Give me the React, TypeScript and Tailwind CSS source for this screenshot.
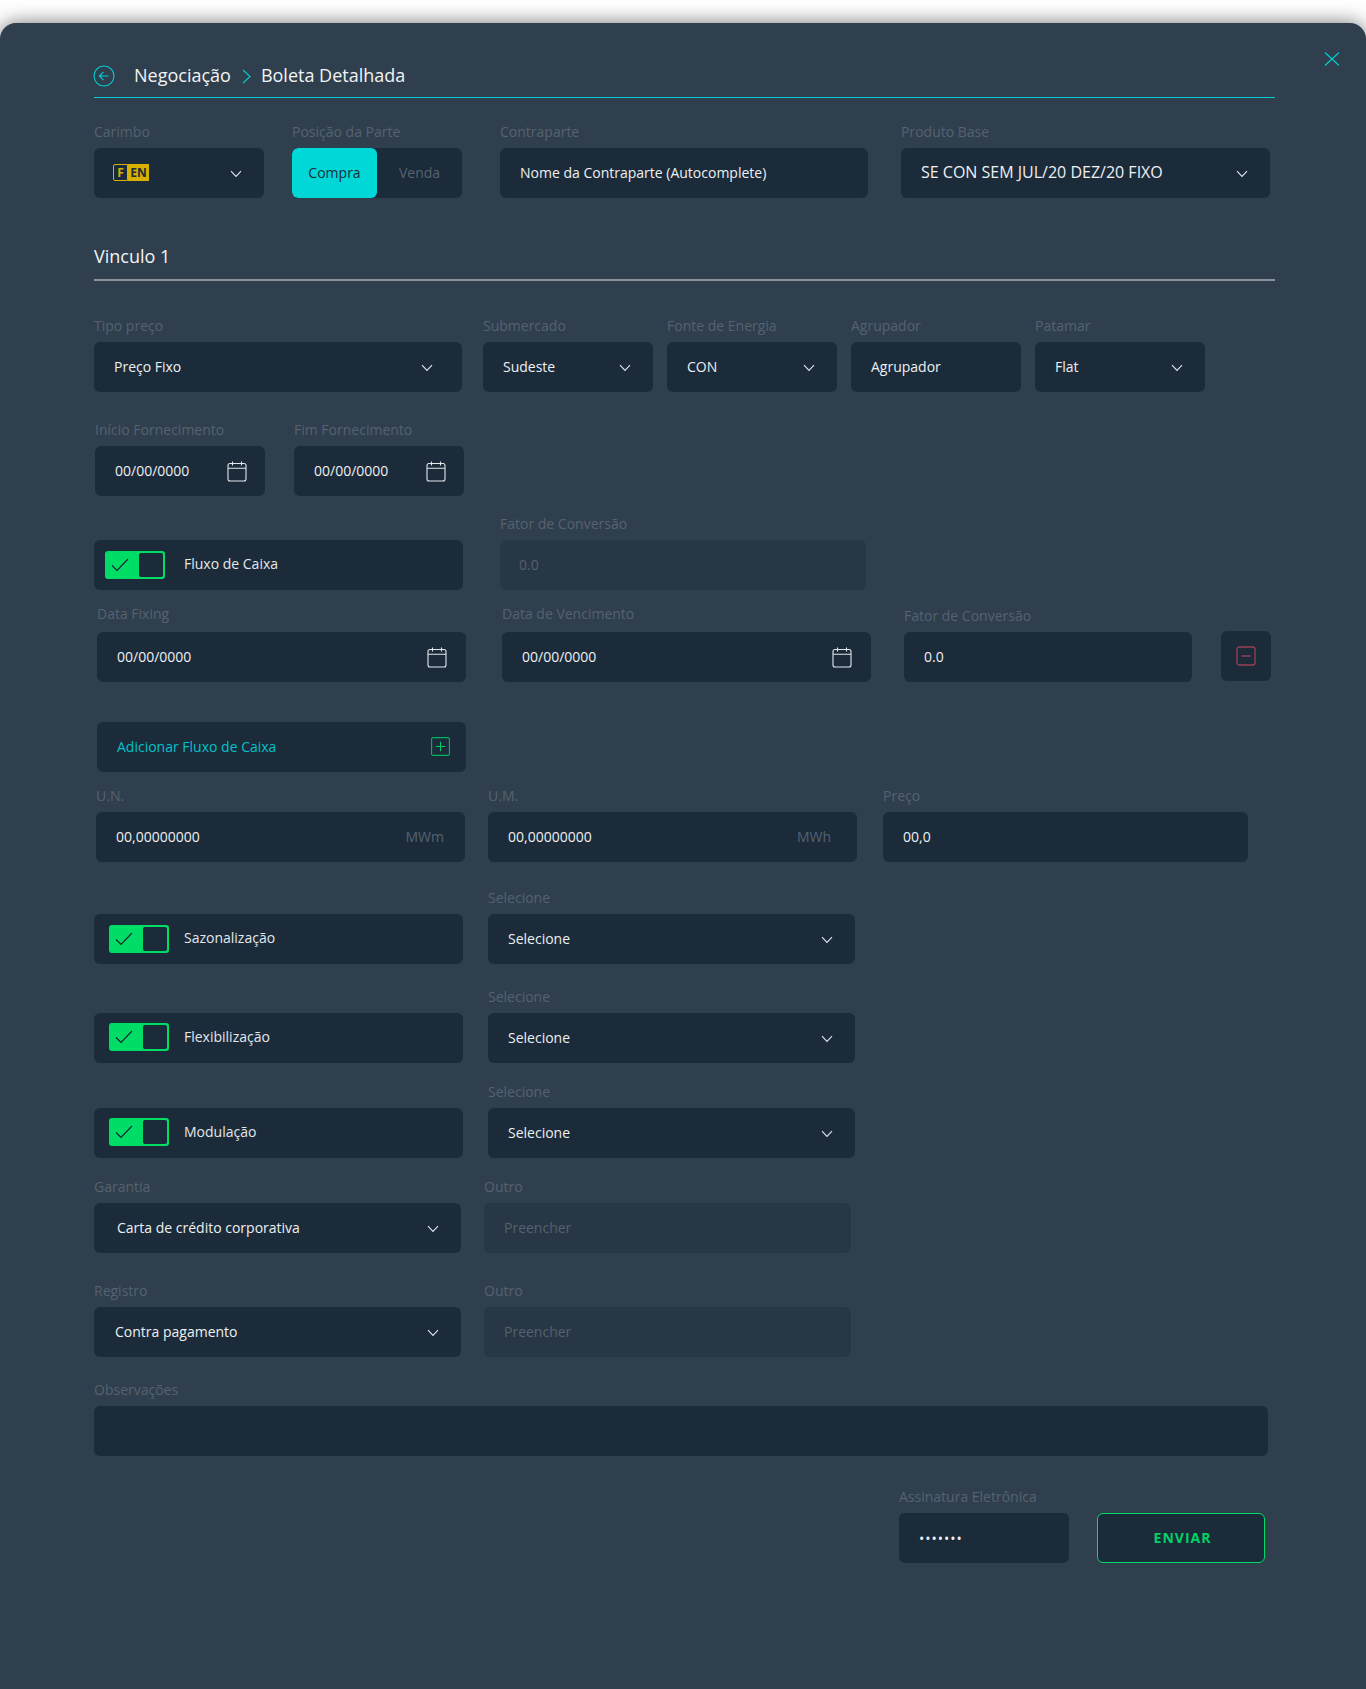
import React from "react";

const box = "h-[50px] rounded-[6px] bg-[#1b2b3a] flex items-center text-[14px]";
const txt = `${box} pb-[2px] text-[#eef0f2]`;
const dim = "h-[50px] rounded-[6px] bg-[#283745] flex items-center pb-[2px] text-[14px] text-[#55616e]";

function Chevron() {
  return (
    <svg width="12" height="8" viewBox="0 0 12 8" fill="none" className="shrink-0 mt-[4px]">
      <path d="M1 1.2 L6 6.4 L11 1.2" stroke="#e4e7ea" strokeWidth="1.1" />
    </svg>
  );
}

function Calendar() {
  return (
    <svg width="20" height="21" viewBox="0 0 20 21" fill="none" className="shrink-0 mt-[2px]">
      <rect x="1" y="2.5" width="18" height="17.5" rx="2" stroke="#e4e7ea" strokeWidth="1.1" />
      <path d="M1 7.2 H19 M5.5 0.5 V4.5 M14.5 0.5 V4.5" stroke="#e4e7ea" strokeWidth="1.1" />
    </svg>
  );
}

function Field({
  label,
  className = "",
  labelClass = "mb-[6px]",
  children,
}: {
  label?: string;
  className?: string;
  labelClass?: string;
  children: React.ReactNode;
}) {
  return (
    <div className={`flex flex-col shrink-0 ${className}`}>
      <div className={`h-[20px] text-[14px] leading-[20px] text-[#56626f] whitespace-nowrap ${labelClass}`}>{label}</div>
      {children}
    </div>
  );
}

function Select({ text, right = "pr-[22px]", left = "pl-[20px]" }: { text: string; right?: string; left?: string }) {
  return (
    <div className={`${txt} ${left} ${right} justify-between`}>
      <span>{text}</span>
      <Chevron />
    </div>
  );
}

function DateBox({ right = "pr-[19px]" }: { right?: string }) {
  return (
    <div className={`${txt} pl-[20px] ${right} justify-between`}>
      <span>00/00/0000</span>
      <Calendar />
    </div>
  );
}

function Toggle({ label, pad, gap }: { label: string; pad: string; gap: string }) {
  return (
    <div className={`${box} ${pad} w-[369px]`}>
      <div className="w-[60px] h-[28px] rounded-[3px] bg-[#00dd66] p-[2px] flex items-center justify-end relative shrink-0">
        <svg width="18" height="14" viewBox="0 0 18 14" fill="none" className="absolute left-[6px] top-[7px]">
          <path d="M1 7.5 L6 12.5 L17 1" stroke="#14222f" strokeWidth="1.1" />
        </svg>
        <div className="w-[24px] h-[24px] rounded-[2px] bg-[#1b2b3a]" />
      </div>
      <span className={`${gap} text-[#e4e7ea]`}>{label}</span>
    </div>
  );
}

export default function App() {
  return (
    <div
      className="w-[1366px] h-[1689px] overflow-hidden bg-white pt-[23px] flex flex-col"
      style={{ fontFamily: '"Open Sans", sans-serif' }}
    >
      <div className="relative flex-1 rounded-t-[16px] bg-[#2f3f4e] shadow-[0_0_20px_rgba(0,0,0,0.55)] pl-[94px]">
        <svg width="16" height="16" viewBox="0 0 16 16" fill="none" className="absolute left-[1324px] top-[28px]">
          <path d="M1 1.5 L15 14.5 M15 1.5 L1 14.5" stroke="#00d0d4" strokeWidth="1.1" />
        </svg>

        {/* Header */}
        <div className="mt-[33px] w-[1181px] h-[42px] pb-[3px] border-b-[1.5px] border-[#00cfd4] flex items-center text-[18px] text-[#f2f4f5]">
          <svg width="22" height="22" viewBox="0 0 22 22" fill="none" className="shrink-0 mt-[2px] -ml-px">
            <circle cx="11" cy="11" r="10" stroke="#00cfd4" strokeWidth="1.1" />
            <path d="M15.5 11 H6.5 M10.5 6.8 L6.3 11 L10.5 15.2" stroke="#00cfd4" strokeWidth="1.1" />
          </svg>
          <span className="ml-[19px]">Negociação</span>
          <svg width="9" height="15" viewBox="0 0 9 15" fill="none" className="ml-[11px] mt-[2px] shrink-0">
            <path d="M1 1 L8 7.5 L1 14" stroke="#00cfd4" strokeWidth="1.1" />
          </svg>
          <span className="ml-[10px]">Boleta Detalhada</span>
        </div>

        {/* Row 1 */}
        <div className="flex mt-[24px]">
          <Field label="Carimbo" className="w-[170px]">
            <div className={`${box} pb-[2px] pl-[19px] pr-[22px] justify-between`}>
              <div className="flex h-[17px] w-[36px] mt-[1px] text-[12px] font-bold leading-[17px] text-[#d8b000]">
                <div className="w-[15px] text-center border border-[#d8b000] rounded-l-[2px] leading-[15px]">F</div>
                <div className="flex-1 text-center bg-[#d8b000] text-[#1b2b3a]">EN</div>
              </div>
              <Chevron />
            </div>
          </Field>
          <Field label="Posição da Parte" className="w-[170px] ml-[28px]">
            <div className={`${box} overflow-hidden`}>
              <div className="w-[85px] h-full pb-[2px] bg-[#00d8d8] rounded-[6px] flex items-center justify-center text-[#1b2b3a]">Compra</div>
              <div className="w-[85px] h-full pb-[2px] flex items-center justify-center text-[#56626f]">Venda</div>
            </div>
          </Field>
          <Field label="Contraparte" className="w-[368px] ml-[38px]">
            <div className={`${txt} pl-[20px]`}>Nome da Contraparte (Autocomplete)</div>
          </Field>
          <Field label="Produto Base" className="w-[369px] ml-[33px]">
            <div className={`${txt} pl-[20px] pr-[22px] justify-between text-[16px]`}>
              <span>SE CON SEM JUL/20 DEZ/20 FIXO</span>
              <Chevron />
            </div>
          </Field>
        </div>

        {/* Vinculo */}
        <div className="mt-[46px] w-[1181px] h-[37px] pb-[11px] border-b-2 border-[#8b9299] text-[18px] leading-[24px] text-[#f2f4f5]">
          Vinculo 1
        </div>

        {/* Row 2 */}
        <div className="flex mt-[35px]">
          <Field label="Tipo preço" className="w-[368px]">
            <Select text="Preço Fixo" right="pr-[29px]" />
          </Field>
          <Field label="Submercado" className="w-[170px] ml-[21px]">
            <Select text="Sudeste" />
          </Field>
          <Field label="Fonte de Energia" className="w-[170px] ml-[14px]">
            <Select text="CON" />
          </Field>
          <Field label="Agrupador" className="w-[170px] ml-[14px]">
            <div className={`${txt} pl-[20px]`}>Agrupador</div>
          </Field>
          <Field label="Patamar" className="w-[170px] ml-[14px]">
            <Select text="Flat" />
          </Field>
        </div>

        {/* Row 3 */}
        <div className="flex mt-[28px] ml-px">
          <Field label="Início Fornecimento" className="w-[170px]">
            <DateBox right="pr-[18px]" />
          </Field>
          <Field label="Fim Fornecimento" className="w-[170px] ml-[29px]">
            <DateBox right="pr-[18px]" />
          </Field>
        </div>

        {/* Row 4 */}
        <div className="flex mt-[18px]">
          <Field className="w-[369px]">
            <Toggle label="Fluxo de Caixa" pad="pl-[11px]" gap="ml-[19px] mb-[4px]" />
          </Field>
          <Field label="Fator de Conversão" className="w-[366px] ml-[37px]">
            <div className={`${dim} pl-[19px]`}>0.0</div>
          </Field>
        </div>

        {/* Row 5 */}
        <div className="flex mt-[16px] ml-[3px]">
          <Field label="Data Fixing" labelClass="-mt-[2px] mb-[8px]" className="w-[369px]">
            <DateBox />
          </Field>
          <Field label="Data de Vencimento" labelClass="-mt-[2px] mb-[8px]" className="w-[369px] ml-[36px]">
            <DateBox />
          </Field>
          <Field label="Fator de Conversão" className="w-[288px] ml-[33px]">
            <div className={`${txt} pl-[20px]`}>0.0</div>
          </Field>
          <div className="w-[50px] h-[50px] mt-[25px] ml-[29px] rounded-[6px] bg-[#1b2b3a] flex items-center justify-center">
            <svg width="20" height="20" viewBox="0 0 20 20" fill="none">
              <rect x="1" y="1" width="18" height="18" rx="2" stroke="#964056" strokeWidth="1.3" />
              <path d="M5.5 10 H14.5" stroke="#964056" strokeWidth="1.5" />
            </svg>
          </div>
        </div>

        {/* Row 6 */}
        <div className="mt-[40px] ml-[3px] w-[369px]">
          <div className={`${box} pb-[2px] pl-[20px] pr-[16px] justify-between text-[#00c2c9]`}>
            <span>Adicionar Fluxo de Caixa</span>
            <svg width="19" height="19" viewBox="0 0 19 19" fill="none">
              <rect x="0.6" y="0.6" width="17.8" height="17.8" rx="1.5" stroke="#00b85c" strokeWidth="1.1" />
              <path d="M9.5 4.8 V14.2 M4.8 9.5 H14.2" stroke="#00c862" strokeWidth="1.1" />
            </svg>
          </div>
        </div>

        {/* Row 7 */}
        <div className="flex mt-[14px] ml-[2px]">
          <Field label="U.N." className="w-[369px]">
            <div className={`${txt} pl-[20px] pr-[21px] justify-between`}>
              <span>00,00000000</span>
              <span className="text-[#56626f]">MWm</span>
            </div>
          </Field>
          <Field label="U.M." className="w-[369px] ml-[23px]">
            <div className={`${txt} pl-[20px] pr-[26px] justify-between`}>
              <span>00,00000000</span>
              <span className="text-[#56626f]">MWh</span>
            </div>
          </Field>
          <Field label="Preço" className="w-[365px] ml-[26px]">
            <div className={`${txt} pl-[20px]`}>00,0</div>
          </Field>
        </div>

        {/* Toggles */}
        <div className="flex mt-[26px]">
          <Field className="w-[369px]">
            <Toggle label="Sazonalização" pad="pl-[15px]" gap="ml-[15px] mb-[3px]" />
          </Field>
          <Field label="Selecione" className="w-[367px] ml-[25px]">
            <Select text="Selecione" />
          </Field>
        </div>
        <div className="flex mt-[23px]">
          <Field className="w-[369px]">
            <Toggle label="Flexibilização" pad="pl-[15px] pb-[2px]" gap="ml-[15px] mb-[1px]" />
          </Field>
          <Field label="Selecione" className="w-[367px] ml-[25px]">
            <Select text="Selecione" />
          </Field>
        </div>
        <div className="flex mt-[19px]">
          <Field className="w-[369px]">
            <Toggle label="Modulação" pad="pl-[15px] pb-[2px]" gap="ml-[15px] mb-[1px]" />
          </Field>
          <Field label="Selecione" className="w-[367px] ml-[25px]">
            <Select text="Selecione" />
          </Field>
        </div>

        {/* Garantia */}
        <div className="flex mt-[19px]">
          <Field label="Garantia" className="w-[367px]">
            <Select text="Carta de crédito corporativa" left="pl-[23px]" />
          </Field>
          <Field label="Outro" className="w-[367px] ml-[23px]">
            <div className={`${dim} pl-[20px]`}>Preencher</div>
          </Field>
        </div>

        {/* Registro */}
        <div className="flex mt-[28px]">
          <Field label="Registro" className="w-[367px]">
            <Select text="Contra pagamento" left="pl-[21px]" />
          </Field>
          <Field label="Outro" className="w-[367px] ml-[23px]">
            <div className={`${dim} pl-[20px]`}>Preencher</div>
          </Field>
        </div>

        {/* Observações */}
        <Field label="Observações" className="w-[1174px] mt-[23px]">
          <div className={box} />
        </Field>

        {/* Assinatura */}
        <div className="flex mt-[31px] ml-[805px]">
          <Field label="Assinatura Eletrônica" className="w-[170px]">
            <div className={`${box} text-[#eef0f2] pl-[20px] tracking-[1px]`}>•••••••</div>
          </Field>
          <button className="w-[168px] h-[50px] mt-[26px] ml-[28px] pb-[2px] pl-[3px] rounded-[6px] bg-[#1b2b3a] border border-[#00dd66] text-[14px] font-bold tracking-[1px] text-[#00d266]">
            ENVIAR
          </button>
        </div>
      </div>
    </div>
  );
}
